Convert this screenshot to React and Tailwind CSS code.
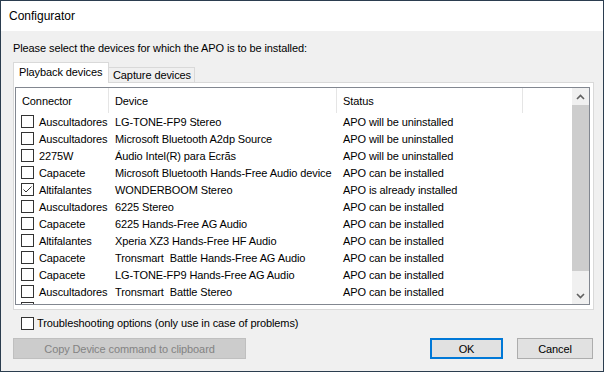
const ROWS = [
  ["Auscultadores", "LG-TONE-FP9 Stereo", "APO will be uninstalled"],
  ["Auscultadores", "Microsoft Bluetooth A2dp Source", "APO will be uninstalled"],
  ["2275W", "Áudio Intel(R) para Ecrãs", "APO will be uninstalled"],
  ["Capacete", "Microsoft Bluetooth Hands-Free Audio device", "APO can be installed"],
  ["Altifalantes", "WONDERBOOM Stereo", "APO is already installed", true],
  ["Auscultadores", "6225 Stereo", "APO can be installed"],
  ["Capacete", "6225 Hands-Free AG Audio", "APO can be installed"],
  ["Altifalantes", "Xperia XZ3 Hands-Free HF Audio", "APO can be installed"],
  ["Capacete", "Tronsmart  Battle Hands-Free AG Audio", "APO can be installed"],
  ["Capacete", "LG-TONE-FP9 Hands-Free AG Audio", "APO can be installed"],
  ["Auscultadores", "Tronsmart  Battle Stereo", "APO can be installed"],
  ["", "", ""],
];

const CheckBox = ({ checked }) => (
  <span className="flex h-[13px] w-[13px] shrink-0 items-center justify-center border border-[#333333] bg-white">
    {checked && (
      <svg width="11" height="11" viewBox="0 0 11 11">
        <path d="M1.5 5.5 L4 8 L9.5 2.5" fill="none" stroke="#333333" strokeWidth="1" />
      </svg>
    )}
  </span>
);

const Chevron = ({ up }) => (
  <svg width="9" height="6" viewBox="0 0 9 6">
    <path
      d={up ? "M1 5 L4.5 1.5 L8 5" : "M1 1 L4.5 4.5 L8 1"}
      fill="none"
      stroke="#606060"
      strokeWidth="1.6"
    />
  </svg>
);

export default function App() {
  return (
    <div
      className="flex h-[372px] w-[604px] flex-col whitespace-nowrap border border-[#2b3d4f] bg-[#f0f0f0] text-[11px] leading-[16px] tracking-[-0.1px] text-black"
      style={{ fontFamily: '"Liberation Sans", Arial, sans-serif' }}
    >
      {/* Barra de título */}
      <div className="flex h-[30px] shrink-0 items-center bg-white pl-[8px] text-[12px] tracking-normal">
        Configurator
      </div>

      {/* Cuerpo */}
      <div className="flex flex-1 flex-col pl-[12px] pr-[10px] pt-[9px]">
        <p>Please select the devices for which the APO is to be installed:</p>

        {/* Pestañas */}
        <div className="mt-[6px] flex items-end">
          <div className="relative z-10 mb-[-1px] h-[21px] w-[96px] border border-b-0 border-[#d9d9d9] bg-white pl-[5px] pt-px">
            Playback devices
          </div>
          <div className="h-[15px] w-[86px] border-r border-t border-[#d9d9d9] pl-[4px] leading-[14px]">
            Capture devices
          </div>
        </div>

        <div className="h-[228px] w-[581px] border border-[#d9d9d9] bg-white pl-px pt-[4px]">
          {/* Lista */}
          <div className="flex h-[218px] w-[575px] border border-[#828790] bg-white">
            <div className="flex-1 overflow-hidden">
              <div className="flex h-[25px] items-center">
                <div className="flex h-full w-[93px] items-center border-r border-[#e5e5e5] pl-[6px]">Connector</div>
                <div className="flex h-full w-[228px] items-center border-r border-[#e5e5e5] pl-[6px]">Device</div>
                <div className="flex h-full w-[186px] items-center border-r border-[#e5e5e5] pl-[6px]">Status</div>
              </div>
              {ROWS.map(([conn, dev, status, checked], i) => (
                <div key={i} className="flex h-[17px] items-center whitespace-pre">
                  <div className="flex w-[93px] items-center gap-[5px] pl-[5px]">
                    <CheckBox checked={checked} />
                    <span>{conn}</span>
                  </div>
                  <div className="w-[228px] pl-[6px]">{dev}</div>
                  <div className="w-[186px] pl-[6px]">{status}</div>
                </div>
              ))}
            </div>

            {/* Barra de desplazamiento */}
            <div className="flex w-[17px] flex-col bg-[#f0f0f0]">
              <div className="flex h-[17px] items-center justify-center">
                <Chevron up />
              </div>
              <div className="h-[166px] bg-[#cdcdcd]" />
              <div className="flex-1" />
              <div className="flex h-[17px] items-center justify-center">
                <Chevron />
              </div>
            </div>
          </div>
        </div>

        <label className="mt-[5px] flex h-[16px] items-center gap-[3px] pl-[8px]">
          <CheckBox />
          <span>Troubleshooting options (only use in case of problems)</span>
        </label>

        <div className="mt-[7px] flex items-center">
          <button className="h-[21px] w-[233px] border border-[#bfbfbf] bg-[#cccccc] text-[#838383]">
            Copy Device command to clipboard
          </button>
          <div className="flex-1" />
          <button className="h-[21px] w-[73px] border-2 border-[#0078d7] bg-[#e1e1e1]">OK</button>
          <button className="ml-[14px] h-[21px] w-[76px] border border-[#adadad] bg-[#e1e1e1]">Cancel</button>
        </div>
      </div>
    </div>
  );
}
